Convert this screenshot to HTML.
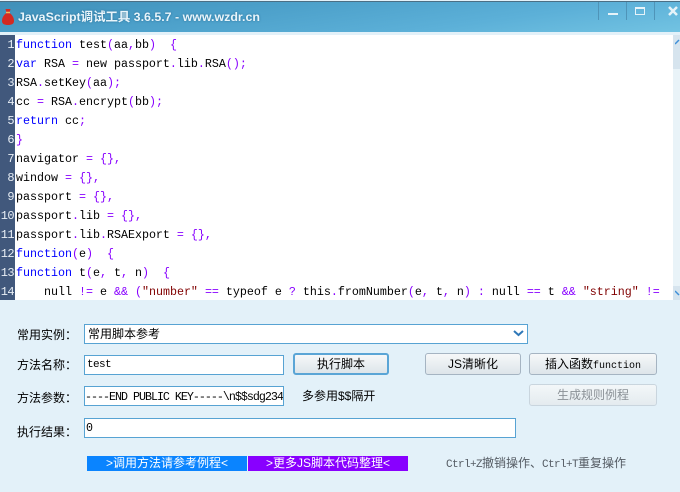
<!DOCTYPE html>
<html>
<head>
<meta charset="utf-8">
<style>
html,body{margin:0;padding:0}
body{width:680px;height:492px;position:relative;overflow:hidden;background:#e3f1f9;font-family:"Liberation Sans","WenQuanYi Zen Hei","Noto Sans CJK SC",sans-serif;color:#000}
div{position:absolute;box-sizing:border-box}
#tb{left:0;top:1px;width:680px;height:31px;background:linear-gradient(172deg,#3f8fb8 0%,#4a9ec8 30%,#5cb0d8 70%,#72c3e2 100%);border-top:1px solid #4b6f85}
#title{left:18px;top:9px;font-size:12.4px;font-weight:bold;color:#e9f5fb;white-space:nowrap;line-height:16px;text-shadow:0 0 2px #2b6f95}
#code{left:15px;top:35px;width:658px;height:265px;background:#fff}
#gut{left:0;top:35px;width:15px;height:265px;background:#41587c}
.n{left:0;width:15px;text-align:right;color:#e8eef5;font:12px/19px "Liberation Mono",monospace;letter-spacing:-.6px;padding-right:1px;height:19px;white-space:nowrap;margin-top:1px}
.l{left:16px;height:19px;font:11.67px/19px "Liberation Mono","WenQuanYi Zen Hei",monospace;white-space:pre;color:#000;margin-top:1px}
b{font-weight:normal;color:#00f}
i{font-style:normal;color:#80f}
u{text-decoration:none;color:#800000}
.lb{left:17px;font-size:12px;line-height:16px;white-space:nowrap}
.inp{background:#fff;border:1px solid #57a3d3;height:20px;white-space:nowrap;overflow:hidden}
.btn{border:1px solid #a5b4c2;border-radius:3px;background:linear-gradient(#f6f8f9,#dde5ea);height:22px;font-size:12px;line-height:20px;text-align:center;white-space:nowrap}
.m{font-family:"Liberation Mono","WenQuanYi Zen Hei",monospace}
</style>
</head>
<body>
<div id="tb"></div>
<svg style="position:absolute;left:2px;top:8px" width="12" height="18" viewBox="0 0 12 18">
<path d="M3.500 1 L8.500 1 L7.500 5 C10.500 7 12 10 12 13 C12 16 9.500 17 6 17 C2.500 17 0 16 0 13 C0 10 1.500 7 4.500 5Z" fill="#d32a22"/>
<path d="M4 4.500 L8 4.500" stroke="#e8c060" stroke-width="1.500"/>
</svg>
<div id="title">JavaScript调试工具 3.6.5.7 - www.wzdr.cn</div>
<div style="left:598px;top:2px;width:1px;height:18px;background:#4f94b8"></div>
<div style="left:626px;top:2px;width:1px;height:18px;background:#4f94b8"></div>
<div style="left:654px;top:2px;width:1px;height:18px;background:#4f94b8"></div>
<div style="left:608px;top:13px;width:10px;height:2px;background:#e6f3f9"></div>
<div style="left:635px;top:7px;width:10px;height:8px;border:1px solid #e6f3f9;border-top-width:2px"></div>
<svg style="position:absolute;left:668px;top:6px" width="10" height="10" viewBox="0 0 10 10"><path d="M1 1 L9 9 M9 1 L1 9" stroke="#e6f3f9" stroke-width="2.500"/></svg>

<div id="code"></div>
<div id="gut"></div>
<div class="n" style="top:35px">1</div><div class="n" style="top:54px">2</div><div class="n" style="top:73px">3</div><div class="n" style="top:92px">4</div><div class="n" style="top:111px">5</div><div class="n" style="top:130px">6</div><div class="n" style="top:149px">7</div><div class="n" style="top:168px">8</div><div class="n" style="top:187px">9</div><div class="n" style="top:206px">10</div><div class="n" style="top:225px">11</div><div class="n" style="top:244px">12</div><div class="n" style="top:263px">13</div><div class="n" style="top:282px">14</div>

<div class="l" style="top:35px"><b>function</b> test<i>(</i>aa<i>,</i>bb<i>)</i>  <i>{</i></div>
<div class="l" style="top:54px"><b>var</b> RSA <i>=</i> new passport<i>.</i>lib<i>.</i>RSA<i>();</i></div>
<div class="l" style="top:73px">RSA<i>.</i>setKey<i>(</i>aa<i>);</i></div>
<div class="l" style="top:92px">cc <i>=</i> RSA<i>.</i>encrypt<i>(</i>bb<i>);</i></div>
<div class="l" style="top:111px"><b>return</b> cc<i>;</i></div>
<div class="l" style="top:130px"><i>}</i></div>
<div class="l" style="top:149px">navigator <i>=</i> <i>{},</i></div>
<div class="l" style="top:168px">window <i>=</i> <i>{},</i></div>
<div class="l" style="top:187px">passport <i>=</i> <i>{},</i></div>
<div class="l" style="top:206px">passport<i>.</i>lib <i>=</i> <i>{},</i></div>
<div class="l" style="top:225px">passport<i>.</i>lib<i>.</i>RSAExport <i>=</i> <i>{},</i></div>
<div class="l" style="top:244px"><b>function</b><i>(</i>e<i>)</i>  <i>{</i></div>
<div class="l" style="top:263px"><b>function</b> t<i>(</i>e<i>,</i> t<i>,</i> n<i>)</i>  <i>{</i></div>
<div class="l" style="top:282px">    null <i>!=</i> e <i>&amp;&amp;</i> <i>(</i><u>"number"</u> <i>==</i> typeof e <i>?</i> this<i>.</i>fromNumber<i>(</i>e<i>,</i> t<i>,</i> n<i>)</i> <i>:</i> null <i>==</i> t <i>&amp;&amp;</i> <u>"string"</u> <i>!=</i></div>

<div style="left:673px;top:35px;width:7px;height:265px;background:#e9f3f8"></div>
<div style="left:673px;top:35px;width:7px;height:34px;background:#d6e4ee"></div>
<svg style="position:absolute;left:675px;top:39px" width="5" height="6"><path d="M0 5 L4 1" stroke="#3f8fd8" stroke-width="1.500"/></svg>
<div style="left:673px;top:286px;width:7px;height:14px;background:#d6e4ee"></div>
<svg style="position:absolute;left:675px;top:290px" width="5" height="6"><path d="M0 1 L4 5" stroke="#3f8fd8" stroke-width="1.500"/></svg>

<div class="lb" style="top:327px">常用实例：</div>
<div class="inp" style="left:84px;top:324px;width:444px;height:20px;font-size:12px;line-height:18px;padding-left:3px">常用脚本参考</div>
<svg style="position:absolute;left:513px;top:330px" width="11" height="7"><path d="M1 1 L5.500 5 L10 1" fill="none" stroke="#2f78b8" stroke-width="2"/></svg>

<div class="lb" style="top:357px">方法名称：</div>
<div class="inp m" style="left:84px;top:355px;width:200px;font-size:11px;line-height:18px;padding-left:2px;letter-spacing:-.6px">test</div>
<div class="btn" style="left:293px;top:353px;width:96px;border:2px solid #5aa5d6;line-height:19px">执行脚本</div>
<div class="btn" style="left:425px;top:353px;width:96px">JS清晰化</div>
<div class="btn" style="left:529px;top:353px;width:128px"><span>插入函数</span><span class="m" style="font-size:10px">function</span></div>

<div class="lb" style="top:390px">方法参数：</div>
<div class="inp m" style="left:84px;top:386px;width:200px;font-size:11.67px;line-height:20px;padding-left:0;letter-spacing:-1px">----END PUBLIC KEY-----\n$$sdg234</div>
<div class="lb" style="left:302px;top:388px">多参用$$隔开</div>
<div class="btn" style="left:529px;top:384px;width:128px;color:#8a9096;border-color:#c9d5de;background:linear-gradient(#f3f7f9,#e4ebef)">生成规则例程</div>

<div class="lb" style="top:424px">执行结果：</div>
<div class="inp m" style="left:84px;top:418px;width:432px;font-size:11.67px;line-height:18px;padding-left:1px">0</div>

<div style="left:87px;top:456px;width:160px;height:15px;background:#0a84ff;color:#fff;font-size:12px;line-height:15px;text-align:center;white-space:nowrap">&gt;调用方法请参考例程&lt;</div>
<div style="left:248px;top:456px;width:160px;height:15px;background:#8800ff;color:#fff;font-size:12px;line-height:15px;text-align:center;white-space:nowrap">&gt;更多JS脚本代码整理&lt;</div>
<div class="m" style="left:446px;top:456px;font-size:12px;line-height:16px;color:#555c64;white-space:nowrap"><span style="font-size:11px;letter-spacing:-.6px">Ctrl+Z</span>撤销操作、<span style="font-size:11px;letter-spacing:-.6px">Ctrl+T</span>重复操作</div>
</body>
</html>
